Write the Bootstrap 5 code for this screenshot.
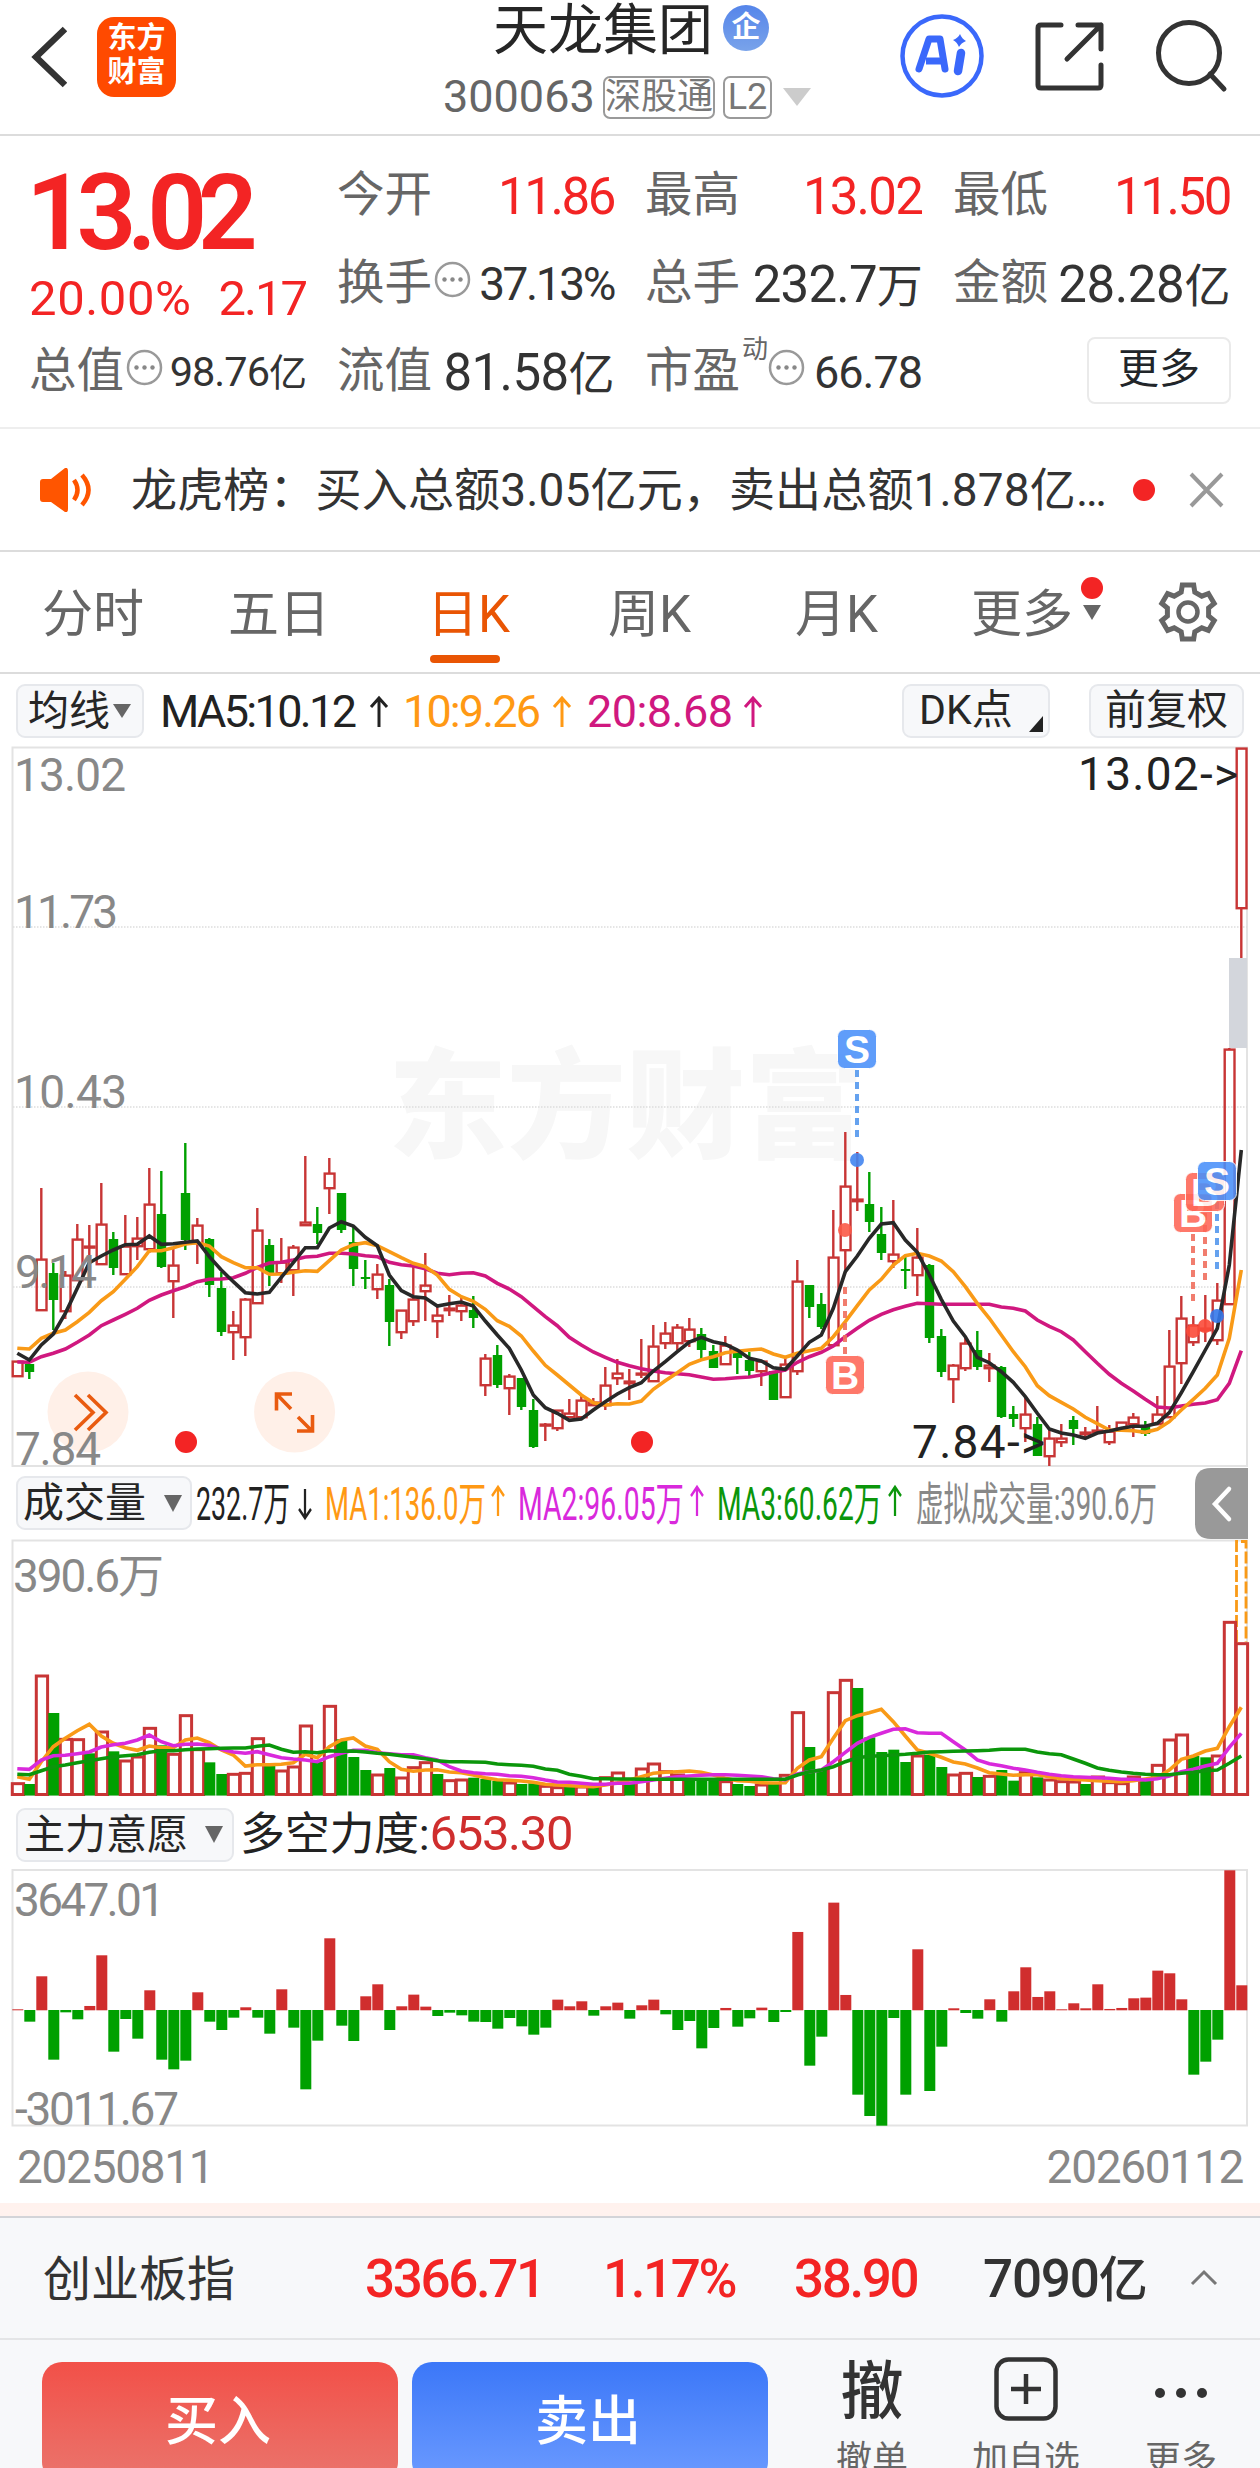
<!DOCTYPE html>
<html lang="zh-CN">
<head>
<meta charset="utf-8">
<meta name="viewport" content="width=device-width, initial-scale=1">
<title>天龙集团 300063</title>
<link href="https://cdn.jsdelivr.net/npm/bootstrap@5.3.0/dist/css/bootstrap.min.css" rel="stylesheet">
<style>
body{font-family:Roboto,"Noto Sans CJK SC",sans-serif;color:#333;background:#fff;line-height:1;height:2468px;overflow:hidden}
svg{display:block;flex:none}
.screen{width:1260px;height:2468px;overflow:hidden}
.up{color:#f32424}
.topbar{height:136px;border-bottom:2px solid #dcdcdc}
.brand-logo{width:79px;height:80px;border-radius:17px;background:#ff4a00;color:#fff;font-weight:700;font-size:29px;line-height:34px;margin-left:30px}
.stock-title{font-size:55px;color:#262626;line-height:60px}
.ent{width:46px;height:46px;border-radius:50%;background:linear-gradient(#5585ea,#79a3ea);color:#fff;font-weight:700;font-size:29px;line-height:44px}
.code{font-size:45px;color:#666;line-height:46px}
.tagbox{border:2px solid #9a9a9a;border-radius:7px;height:43px;font-size:36px;color:#777;line-height:38px}
.quote{height:293px;border-bottom:2px solid #eee;padding:16px 31px 0 29px;display:grid;grid-template-columns:repeat(4,277px);column-gap:31px;grid-template-rows:repeat(3,88px)}
.quote .big{grid-row:span 2}
.last{font-size:105px;font-weight:600;letter-spacing:-9.5px;line-height:106px;margin:9px 0 0 -3px;white-space:nowrap}
.chg{font-size:49px;line-height:50px;margin-top:7px;white-space:nowrap}
.kv{height:88px;white-space:nowrap;color:#333;font-size:51px}
.kv b{font-weight:400;font-size:47.5px;color:#666}
.kv .tight{letter-spacing:-2.4px}
.kv i{font-style:normal;font-size:46px}
.more-btn{width:144px;height:67px;border:2px solid #eaeaea;border-radius:8px;font-size:41px;background:#fff;padding:0}
.notice{height:123px;border-bottom:2px solid #dcdcdc;padding:0 35px 0 40px;font-size:46px;white-space:nowrap}
.reddot{width:22px;height:22px;border-radius:50%;background:#f32424}
.tabs{height:122px;border-bottom:2px solid #dcdcdc;font-size:51px;color:#666;padding:5px 41px 0 42px}
.tabs .tab{position:relative;line-height:60px;white-space:nowrap}
.tabs .on{color:#e95504}
.tabs .on::after{content:"";position:absolute;left:3px;bottom:-18px;width:70px;height:8px;border-radius:4px;background:#e95504}
.tool{height:73px;color:#222;white-space:nowrap}
.pill{background:#f7f8fa;border:2px solid #e6e8ec;border-radius:9px;height:54px;font-size:41px;color:#262626;line-height:48px}
.dates{height:77px;padding:18px 17px 0 17px;color:#888;font-size:46px;letter-spacing:-1.3px}
.band{height:13px;background:#fff2ee}
.indexbar{height:124px;background:#f7f8fa;border-top:2px solid #d3d4d8;border-bottom:2px solid #e4e5e7;font-size:48px;padding:3px 42px 0 43px}
.num{font-size:53px;font-weight:500;letter-spacing:-2.4px}
.trade{height:129px;background:#f7f8fa;padding:22px 0 0 42px}
.trade .act{width:356px;height:120px;border:0;border-radius:20px;color:#fff;font-size:53px;font-weight:500;line-height:60px;padding:0 4px 0 0}
.buy{background:linear-gradient(#f25048,#ea756d)}
.sell{background:linear-gradient(#3b77f8,#6c9bff);margin-left:14px}
.foot-item{color:#666;font-size:36px;white-space:nowrap}
.foot-item .ico{height:62px;margin-bottom:18px}
</style>
</head>
<body>
<main class="screen">
<header class="topbar d-flex">
  <div class="d-flex align-items-start" style="padding:17px 0 0 30px">
    <svg width="37" height="80"><path d="M35 12 6 40 35 68" fill="none" stroke="#333" stroke-width="6.5"/></svg>
    <div class="brand-logo text-center pt-1">东方<br>财富</div>
  </div>
  <div style="margin-left:267px;width:400px">
    <div class="d-flex align-items-center" style="padding-left:50px">
      <span class="stock-title">天龙集团</span><span class="ent text-center" style="margin:-4px 0 0 10px">企</span>
    </div>
    <div class="d-flex align-items-center" style="margin-top:14px">
      <span class="code" style="width:160px">300063</span>
      <span class="tagbox text-center" style="width:112px">深股通</span>
      <span class="tagbox text-center" style="width:49px;margin-left:8px">L2</span>
      <svg width="28" height="18" style="margin-left:11px"><path d="M0 0h28L14 18z" fill="#ccc"/></svg>
    </div>
  </div>
  <svg width="340" height="110" style="margin-left:54px">
    <g transform="translate(-897)">
    <circle cx="942" cy="56" r="39.5" fill="none" stroke="#3a68fb" stroke-width="4.5"/>
    <path d="M919 69 929 39h11l5 30" fill="none" stroke="#3a68fb" stroke-width="7" stroke-linejoin="round" stroke-linecap="round"/><path d="M926 61h15" stroke="#3a68fb" stroke-width="7"/>
    <path d="M961 53 958 71" stroke="#3a68fb" stroke-width="8.5" stroke-linecap="round"/>
    <path d="M960 34q2 5 6 7-5 2-7 6-2-5-6-7 5-2 7-6z" fill="#3a68fb"/>
    <path d="M1061 25h-20q-3 0-3 3v57q0 3 3 3h57q3 0 3-3V65M1078 25h23v24M1101 25 1067 59" fill="none" stroke="#333" stroke-width="5" stroke-linecap="round" stroke-linejoin="round"/>
    <circle cx="1189" cy="53" r="30.5" fill="none" stroke="#333" stroke-width="5"/><path d="m1210 74 14 15" stroke="#333" stroke-width="5" stroke-linecap="round"/>
    </g>
  </svg>
</header>

<section class="quote">
  <div class="big up">
    <div class="last">13.02</div>
    <div class="chg d-flex"><span style="width:193px;letter-spacing:.6px">20.00%</span><span style="letter-spacing:-2px">2.17</span></div>
  </div>
  <div class="kv d-flex align-items-center justify-content-between"><b>今开</b><span class="up tight">11.86</span></div>
  <div class="kv d-flex align-items-center justify-content-between"><b>最高</b><span class="up tight" style="letter-spacing:-1.8px">13.02</span></div>
  <div class="kv d-flex align-items-center justify-content-between"><b>最低</b><span class="up tight">11.50</span></div>
  <div class="kv d-flex align-items-center justify-content-between"><b>换手</b><svg width="37" height="37" style="margin:-9px 0 0 -6px"><use href="#info"/></svg><span class="tight" style="font-size:46px">37.13%</span></div>
  <div class="kv d-flex align-items-center justify-content-between"><b>总手</b><span style="letter-spacing:-.8px">232.7<i>万</i></span></div>
  <div class="kv d-flex align-items-center justify-content-between"><b>金额</b><span style="letter-spacing:-.4px">28.28<i>亿</i></span></div>
  <div class="kv d-flex align-items-center justify-content-between"><b>总值</b><svg width="37" height="37" style="margin:-9px 0 0 -5px"><use href="#info"/></svg><span style="font-size:41.5px;letter-spacing:-1px">98.76<i style="font-size:38px">亿</i></span></div>
  <div class="kv d-flex align-items-center justify-content-between"><b>流值</b><span style="letter-spacing:-.6px">81.58<i>亿</i></span></div>
  <div class="kv d-flex align-items-center"><b>市盈</b><small style="font-size:26px;line-height:26px;color:#666;margin:-46px 0 0 2px">动</small><svg width="37" height="37" style="margin-top:-9px"><use href="#info"/></svg><span class="ms-auto" style="font-size:45px;letter-spacing:-1px">66.78</span></div>
  <div class="kv d-flex align-items-center justify-content-end" style="margin:-2px -1px 0 0"><button class="btn more-btn">更多</button></div>
</section>

<section class="notice d-flex align-items-center">
  <svg width="51" height="44"><path d="M0 14q0-3 3-3h8L25 0q3-1 3 3v38q0 4-3 3L11 34H3q-3 0-3-3z" fill="#ff5500"/><path d="M34 12q7 10 0 20M42 7q13 15 0 30" fill="none" stroke="#ff5500" stroke-width="4.5"/></svg>
  <span style="margin-left:40px;width:1002px;letter-spacing:.15px">龙虎榜：买入总额3.05亿元，卖出总额1.878亿…</span>
  <span class="reddot"></span>
  <svg width="36" height="36" style="margin-left:34px"><path d="m2 2 31 32M33 2 2 34" stroke="#999" stroke-width="4"/></svg>
</section>

<nav class="tabs d-flex align-items-center">
  <span class="tab" style="width:186px">分时</span><span class="tab" style="width:199px">五日</span><span class="tab on" style="width:181px">日K</span><span class="tab" style="width:187px">周K</span><span class="tab" style="width:176px">月K</span>
  <span class="tab d-flex">更多<svg width="24" height="60" style="margin-left:7px;overflow:visible"><circle cx="12" cy="3" r="11" fill="#f32424"/><path d="M3 20h18l-9 15z" fill="#666"/></svg></span>
  <svg width="62" height="62" viewBox="-31 -31 62 62" class="ms-auto" style="margin-top:-6px"><path id="gear" fill="none" stroke="#666" stroke-width="5"/><circle r="9.5" fill="none" stroke="#666" stroke-width="4.5"/></svg>
</nav>

<section class="tool d-flex align-items-center" style="padding:0 16px">
  <div class="pill d-flex align-items-center" style="width:128px;padding-left:10px">均线<svg width="18" height="14" style="margin-left:3px"><path d="M0 0h18L9 14z" fill="#666"/></svg></div>
  <svg width="620" height="60" font-size="45" style="margin-left:14px"><g transform="translate(-158)">
    <text x="160" y="46" textLength="197" fill="#222">MA5:10.12</text>
    <text x="403" y="46" textLength="138" fill="#ff9914">10:9.26</text>
    <text x="587" y="46" textLength="146" fill="#d0187f">20:8.68</text>
    <use href="#arr" x="379" y="16" stroke="#222"/><use href="#arr" x="562" y="16" stroke="#ff9914"/><use href="#arr" x="753" y="16" stroke="#d0187f"/></g></svg>
  <div class="pill d-flex position-relative" style="width:148px;padding-left:15px;margin-left:auto">DK点<svg width="14" height="16" style="position:absolute;right:5px;bottom:4px"><path d="M14 0v16H0z" fill="#222"/></svg></div>
  <div class="pill text-center" style="width:155px;margin-left:39px">前复权</div>
</section>

<svg id="kline" width="1260" height="719" viewBox="0 747 1260 719" overflow="visible"></svg>

<section class="tool d-flex align-items-center" style="height:74px;padding:0 16px 0 16px">
  <div class="pill d-flex align-items-center" style="width:176px;padding-left:5px">成交量<svg width="18" height="17" style="margin-left:18px"><path d="M0 0h18L9 17z" fill="#666"/></svg></div>
  <svg width="976" height="60" font-size="46" style="margin-left:3px"><g transform="translate(-195)">
    <text x="196" y="47" textLength="94" lengthAdjust="spacingAndGlyphs" fill="#222">232.7万</text>
    <text x="325" y="47" textLength="161" lengthAdjust="spacingAndGlyphs" fill="#ff9914">MA1:136.0万</text>
    <text x="518" y="47" textLength="166" lengthAdjust="spacingAndGlyphs" fill="#d929dc">MA2:96.05万</text>
    <text x="717" y="47" textLength="165" lengthAdjust="spacingAndGlyphs" fill="#0b960b">MA3:60.62万</text>
    <text x="916" y="47" textLength="241" lengthAdjust="spacingAndGlyphs" fill="#888">虚拟成交量:390.6万</text>
    <use href="#arr" transform="translate(305 46) scale(.75 -1)" stroke="#222"/><use href="#arr" transform="translate(498 6) scale(.75 1)" y="7" stroke="#ff9914"/><use href="#arr" transform="translate(697 6) scale(.75 1)" y="7" stroke="#d929dc"/><use href="#arr" transform="translate(895 6) scale(.75 1)" y="7" stroke="#0b960b"/></g></svg>
  <svg width="53" height="71" style="margin:1px -4px 0 auto"><path d="M53 0H16Q0 0 0 16v39q0 16 16 16h37z" fill="#999"/><path d="M34 21 20 36l14 15" fill="none" stroke="#fff" stroke-width="4.5" stroke-linecap="round"/></svg>
</section>

<svg id="volume" width="1260" height="256" viewBox="0 1540 1260 256" overflow="visible"></svg>

<section class="tool d-flex align-items-center" style="height:73px;padding:4px 0 0 16px">
  <div class="pill d-flex align-items-center" style="width:218px;padding-left:6px">主力意愿<svg width="18" height="17" style="margin-left:17px"><path d="M0 0h18L9 17z" fill="#666"/></svg></div>
  <div style="font-size:45px;margin:-3px 0 0 6px;letter-spacing:-.3px">多空力度:<span style="color:#cf2e2e;font-size:49px;letter-spacing:-1.3px">653.30</span></div>
</section>

<svg id="flow" width="1260" height="257" viewBox="0 1869 1260 257" overflow="visible"></svg>

<div class="dates d-flex justify-content-between"><span>20250811</span><span>20260112</span></div>
<div class="band"></div>

<section class="indexbar d-flex align-items-center">
  <span style="width:322px">创业板指</span>
  <span class="num up" style="width:238px">3366.71</span>
  <span class="num up" style="width:191px">1.17%</span>
  <span class="num up" style="width:189px">38.90</span>
  <span class="num" style="letter-spacing:-1.2px">7090<span style="font-size:49px">亿</span></span>
  <svg width="28" height="18" class="ms-auto" style="margin-top:-4px"><path d="M2 15 14 3l12 12" fill="none" stroke="#777" stroke-width="3"/></svg>
</section>
<section class="trade d-flex align-items-start">
  <button class="btn act buy">买入</button><button class="btn act sell">卖出</button>
  <div class="foot-item text-center" style="margin-left:66px;width:76px"><div class="ico" style="font-size:63px;font-weight:500;color:#333;line-height:60px">撤</div>撤单</div>
  <div class="foot-item text-center" style="margin-left:60px;width:112px"><div class="ico d-flex justify-content-center"><svg width="64" height="64" style="margin-top:-5px"><rect x="2.5" y="2.5" width="59" height="59" rx="12" fill="none" stroke="#333" stroke-width="4.5"/><path d="M32 17v30M17 32h30" stroke="#333" stroke-width="4.5"/></svg></div>加自选</div>
  <div class="foot-item text-center" style="margin-left:62px;width:74px"><div class="ico"><svg width="74" height="62"><g fill="#333"><circle cx="16" cy="31" r="5"/><circle cx="37" cy="31" r="5"/><circle cx="58" cy="31" r="5"/></g></svg></div>更多</div>
</section>
</main>

<svg width="0" height="0" style="position:absolute"><defs>
  <g id="info"><circle cx="18.5" cy="18.5" r="16.5" fill="none" stroke="#999" stroke-width="2.5"/><g fill="#888"><circle cx="10.5" cy="18.5" r="2.2"/><circle cx="18.5" cy="18.5" r="2.2"/><circle cx="26.5" cy="18.5" r="2.2"/></g></g>
  <path id="arr" d="M0 30V1M-8 10 0 1 8 10" fill="none" stroke-width="3"/>
</defs></svg>

<script src="https://cdn.jsdelivr.net/npm/bootstrap@5.3.0/dist/js/bootstrap.bundle.min.js"></script>
<script>
const RED='#c83535', GREEN='#00a000', X=i=>17.3+12*i;
const rect=(x,y,w,h,a)=>`<rect x="${x}" y="${y}" width="${w}" height="${h}" ${a}/>`;
const label=(x,y,w,t,c='#888')=>`<text x="${x}" y="${y}" font-size="46" textLength="${w}" fill="${c}">${t}</text>`;
const frame=(y,h)=>rect(12.5,y,1234.5,h,'fill="none" stroke="#e3e3e3" stroke-width="2"');
// moving-average polyline; samples are in thirds of a pixel below y0
const line=(vals,y0,c)=>`<polyline fill="none" stroke="${c}" stroke-width="3.6" points="${vals.map((v,i)=>X(i).toFixed(1)+','+(y0+v/3).toFixed(1)).join(' ')}"/>`;

// settings gear outline
let g='';for(let k=0;k<6;k++){const p=(r,d)=>{const a=(k*60-90+d)*Math.PI/180;return (r*Math.cos(a)).toFixed(1)+' '+(r*Math.sin(a)).toFixed(1)};
 g+=(k?'L':'M')+p(27.5,-12)+'L'+p(27.5,12)+'L'+p(21,19)+'L'+p(21,41);}
document.getElementById('gear').setAttribute('d',g+'Z');

// candles: direction, high, body top, body bottom, low
const K=`r 1361 1361 1376 1376|g 1364 1364 1372 1379|r 1188 1259 1310 1310|g 1263 1273 1300 1330|r 1271 1275 1311 1319|r 1224 1239 1280 1280|r 1225 1246 1247 1257|r 1183 1224 1264 1264|g 1232 1239 1268 1275|r 1215 1246 1274 1274|r 1217 1238 1246 1260|r 1168 1204 1249 1253|g 1171 1214 1267 1268|r 1249 1265 1281 1318|g 1143 1193 1240 1250|r 1218 1225 1243 1264|g 1238 1239 1285 1297|g 1272 1288 1332 1336|r 1311 1325 1332 1360|r 1298 1299 1337 1356|r 1208 1230 1303 1303|g 1239 1245 1273 1286|r 1238 1262 1273 1283|r 1245 1247 1270 1296|r 1156 1222 1225 1225|g 1207 1224 1233 1244|r 1158 1173 1188 1214|g 1193 1193 1230 1233|g 1226 1242 1269 1286|g 1260 1277 1279 1289|r 1264 1274 1289 1299|g 1279 1285 1322 1346|r 1310 1310 1332 1339|r 1265 1299 1321 1326|r 1253 1285 1291 1321|r 1306 1315 1321 1338|r 1295 1308 1310 1316|r 1297 1305 1311 1321|g 1296 1310 1318 1328|r 1354 1358 1385 1396|g 1345 1355 1385 1388|r 1374 1376 1388 1415|g 1378 1378 1407 1410|g 1399 1410 1447 1448|r 1423 1424 1425 1441|r 1410 1410 1428 1431|r 1399 1413 1417 1417|r 1396 1400 1417 1417|r 1398 1402 1405 1405|r 1367 1385 1405 1410|r 1359 1373 1378 1385|r 1369 1381 1383 1400|r 1339 1373 1374 1378|r 1325 1346 1381 1381|r 1322 1333 1343 1349|r 1324 1327 1343 1350|r 1318 1329 1341 1347|g 1328 1334 1350 1359|g 1345 1351 1368 1368|r 1336 1345 1364 1364|g 1353 1353 1358 1374|g 1352 1360 1371 1377|r 1360 1361 1371 1386|g 1371 1371 1400 1400|r 1357 1364 1397 1397|r 1260 1281 1371 1375|g 1285 1285 1307 1318|g 1293 1304 1327 1329|r 1210 1257 1345 1345|r 1132 1186 1250 1273|r 1152 1199 1201 1211|g 1172 1204 1222 1232|g 1207 1234 1253 1260|r 1200 1254 1261 1268|g 1257 1269 1271 1289|r 1228 1257 1275 1296|g 1264 1265 1338 1343|g 1329 1336 1372 1377|r 1364 1365 1379 1403|r 1337 1343 1368 1371|g 1331 1350 1367 1370|r 1353 1365 1368 1382|g 1366 1367 1417 1418|g 1406 1414 1419 1427|r 1398 1414 1428 1442|g 1417 1424 1456 1456|r 1430 1438 1456 1466|r 1424 1438 1442 1447|g 1416 1420 1429 1445|r 1427 1432 1434 1437|r 1406 1430 1432 1432|r 1425 1431 1442 1445|r 1422 1422 1430 1430|r 1413 1417 1424 1437|g 1421 1427 1434 1436|r 1396 1414 1424 1424|r 1330 1366 1417 1417|r 1296 1318 1363 1384|r 1316 1325 1342 1346|r 1295 1328 1330 1342|r 1283 1300 1340 1345|r 1048 1049 1304 1304|r 748 748 908 958`.split('|').map(s=>s.split(' '));
const P5=[760,780,735,702,640,565,488,468,450,434,433,408,433,431,427,423,470,510,545,578,582,577,532,488,443,443,384,365,378,412,437,525,572,590,594,618,611,606,618,663,705,745,810,885,923,940,961,957,930,905,882,863,848,813,785,755,726,712,725,733,750,775,783,803,808,768,727,705,625,515,468,415,372,368,420,457,525,598,663,710,772,788,815,847,890,940,987,999,1005,1015,999,993,985,979,979,970,938,878,815,750,685,495,150];
const P10=[745,747,715,700,690,665,637,602,575,538,500,452,452,443,432,428,438,470,488,503,503,523,522,517,512,514,482,450,434,428,437,455,473,490,500,525,568,590,604,628,662,679,708,753,796,825,855,885,908,915,911,912,903,868,842,818,793,779,770,758,754,750,747,762,772,760,752,745,710,665,617,570,538,495,467,460,468,483,515,560,610,655,705,755,800,857,887,907,927,952,971,990,991,992,997,988,965,930,898,865,825,715,510];
const P20=[786,787,770,760,747,727,705,677,660,643,625,601,585,572,560,545,538,537,533,520,502,489,487,480,471,469,460,460,462,467,470,487,494,498,506,520,524,520,518,528,550,567,590,620,650,677,712,735,756,772,787,797,806,813,818,821,824,831,838,836,833,831,825,817,810,787,770,757,738,710,685,661,643,629,619,610,611,613,613,613,613,613,621,625,633,660,679,695,720,755,790,823,850,873,898,921,924,918,913,909,899,850,752];
const dash=(x,y1,y2,c)=>`<path d="M${x} ${y1}V${y2}" stroke="${c}" stroke-width="4" stroke-dasharray="7 5" opacity=".9"/>`;
const dot=(x,y,c,r=7)=>`<circle cx="${x}" cy="${y}" r="${r}" fill="${c}" opacity="${r>7?1:.9}"/>`;
const mark=(x,y,t)=>`<g opacity=".88">${rect(x-19.5,y-19.5,39,39,`rx="7" fill="${t=='S'?'#4a90fa':'#fe6656'}" stroke="#fff" stroke-width="1"`)}<text x="${x}" y="${y+14}" text-anchor="middle" font-size="39" font-weight="700" font-family="Liberation Sans,sans-serif" fill="#fff">${t}</text></g>`;
let s=`<text x="388" y="1149" font-size="119" font-weight="900" textLength="476" fill="#f7f7f7">东方财富</text>`+frame(747.5,718.5);
for(const y of[927,1107,1287])s+=`<path d="M13 ${y}H1247" stroke="#ddd" stroke-width="1.6" stroke-dasharray="1.5 1.5"/>`;
s+=rect(1229,958,18,90,'fill="#d3d6dc"');
K.forEach(([c,h,t,b,l],i)=>{h=+h;t=+t;b=+b;l=+l;const x=X(i),k=c=='r'?RED:GREEN;
 if(h<t)s+=rect(x-1.2,h,2.4,t-h,`fill="${k}"`); if(l>b)s+=rect(x-1.2,b,2.4,l-b,`fill="${k}"`);
 if(c=='g')s+=rect(x-4.5,t,9.4,b-t,`fill="${k}"`); else s+=rect(x-4.6,t+.6,9.8,Math.max(1,b-t-.4),`fill="none" stroke="${k}" stroke-width="2.4"`);});
s+=line(P20,1100,'#d0187f')+line(P10,1100,'#f99a17')+line(P5,1100,'#282828');
s+=label(14,791,112,'13.02')+label(14,928,104,'11.73')+label(14,1108,113,'10.43')+label(15,1288,82,'9.14');
for(const x of[88,294.6])s+=`<circle cx="${x}" cy="1412" r="40.5" fill="#fff0e8"/>`;
s+=label(15,1465,86,'7.84')+'<g fill="none" stroke="#e95b10" stroke-width="3.6"><path d="m75 1395 18 17.5L75 1430M88 1395l18 17.5L88 1430M292 1394h-15.500v16.500M277 1394.500 291 1409M312.500 1415v16H297M312 1431 298 1417"/></g>';
s+=dot(186,1442,'#f32424',11)+dot(642,1442,'#f32424',11);
s+=label(1078,790,160,'13.02-&gt;','#222')+label(912,1458,133,'7.84-&gt;','#222');
const B='#f0705f',S='#5599ee';
s+=dash(857,1070,1138,S)+dot(857,1160,'#4285f0')+mark(857,1049,'S')+dot(845,1230,'#fb5a48')+dash(845,1287,1354,B)+mark(845,1375,'B');
s+=dash(1193,1234,1301,B)+dash(1205,1213,1280,B)+dash(1217,1202,1269,S)+dot(1193,1331,'#fb4a38')+dot(1205,1326,'#fb4a38')+dot(1217,1316,'#3478ea')+mark(1193,1213,'B')+mark(1205,1192,'B')+mark(1217,1181,'S');
document.getElementById('kline').innerHTML=s;

// volume bars: direction and height of the top edge, in thirds of a pixel from y=1460
const V='r968 g972 r645 g759 r835 r836 g880 r813 g874 r900 r888 r802 g856 r880 r764 r866 g907 g942 r940 r937 r833 g918 r930 r918 r795 g906 r736 g838 g891 g930 r942 g924 r951 r920 r905 g942 r959 r957 g953 g957 g963 r966 g972 g970 r976 r980 g980 r978 g980 r950 r936 g970 r924 r909 r932 r942 g958 g958 g956 r962 g972 g978 r972 g972 r943 r755 g861 g930 r695 r658 g684 g832 g876 g869 g906 r885 g884 g921 r942 r937 g951 r946 g930 g962 r935 g952 r957 r962 r963 g972 r948 r965 r968 r948 g960 r913 r837 r822 g888 g892 r885 r484 r548'.split(' ');
const W1=[950,958,905,860,835,812,793,828,850,863,871,858,863,863,840,834,848,870,885,918,914,914,913,908,883,893,860,840,834,858,868,905,928,934,930,929,936,938,945,953,959,961,963,967,973,975,977,979,980,975,968,960,950,940,937,935,933,937,945,955,962,964,968,969,968,925,900,890,835,782,767,758,748,785,828,870,880,892,906,912,924,938,942,946,944,944,950,956,958,960,962,964,965,962,957,952,930,898,888,873,865,800,742];
const W2=[926,928,900,887,886,881,876,861,854,850,840,825,845,857,853,852,856,868,876,880,875,884,893,897,900,905,890,880,871,871,878,881,884,884,893,900,920,933,938,941,943,947,949,953,960,966,967,970,973,973,970,970,965,960,955,950,948,946,944,944,946,948,950,956,959,942,935,930,905,877,850,832,820,808,806,818,820,820,845,870,900,911,917,925,930,937,943,947,950,952,953,955,958,958,960,956,948,935,928,918,910,862,820];
const W3=[943,944,932,920,915,908,902,896,890,887,884,877,872,872,869,867,866,865,864,864,859,855,868,877,875,878,872,874,873,876,880,883,887,892,896,902,905,905,906,907,912,914,916,919,927,931,943,949,956,956,957,957,958,958,958,958,958,958,958,958,958,958,958,958,958,945,935,930,920,905,893,889,887,885,883,880,876,875,874,873,872,871,868,868,868,876,881,884,897,910,924,931,936,940,943,944,944,940,937,932,930,910,888];
s=frame(1540.5,254.5);
s+='<path d="M1236.500 1642V1541.500H1246V1642" fill="none" stroke="#f99a17" stroke-width="2.800" stroke-dasharray="12 3"/>';
V.forEach((v,i)=>{const y=1460+v.slice(1)/3,x=X(i);
 s+=v[0]=='g'?rect(x-5,y,11,1795.5-y,`fill="${GREEN}"`):rect(x-5,y+1,11.3,1793.5-y,`fill="#fff" stroke="${RED}" stroke-width="3"`);});
s+=line(W1,1460,'#f99a17')+line(W2,1460,'#d929dc')+line(W3,1460,'#0b960b')+label(13,1592,151,'390.6万');
document.getElementById('volume').innerHTML=s;

// net force bars, thirds of a pixel around the zero line
const F=[3,-35,102,-149,-7,-28,13,165,-125,-27,-86,60,-149,-178,-152,54,-35,-60,-23,9,-23,-71,63,-53,-238,-92,216,-47,-93,42,78,-60,12,47,11,-18,-8,-16,-35,-36,-56,-24,-49,-74,-53,32,12,27,-17,12,23,-26,15,32,-13,-60,-33,-115,-54,7,-50,-25,8,-36,-6,235,-167,-80,323,46,-254,-318,-347,-24,-254,183,-243,-110,6,-9,-26,33,-35,57,129,40,57,3,21,6,78,4,7,36,38,119,111,33,-194,-155,-89,420,75];
s=frame(1870,255.5);
F.forEach((v,i)=>{s+=rect(X(i)-5,v>0?2010.3-v/3:2010,11,Math.abs(v)/3,`fill="${v>0?'#d02e2e':GREEN}"`)});
s+=label(14,1916,151,'3647.01')+label(15,2125,164,'-3011.67');
document.getElementById('flow').innerHTML=s;
</script>
</body>
</html>
